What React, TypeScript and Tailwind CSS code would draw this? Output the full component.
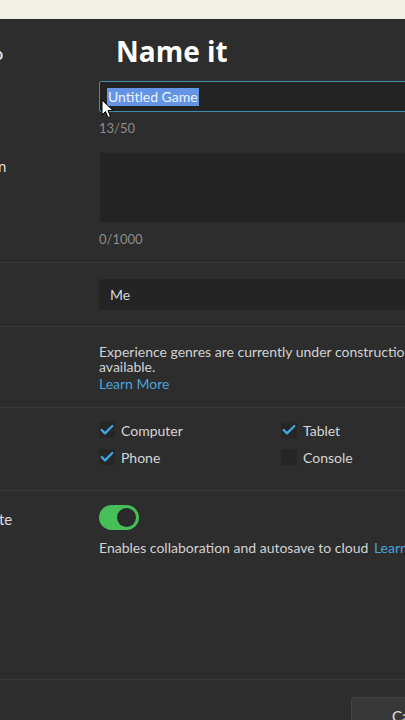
import { Check } from "lucide-react";

function Label({ children, className = "" }: { children: React.ReactNode; className?: string }) {
  return <div className={"pl-[10px] text-[15px] text-[#dcdcdc] " + className}>{children}</div>;
}

function Box({ checked, label }: { checked: boolean; label: string }) {
  return (
    <div className="flex items-center h-[18px] gap-[6px]">
      <div className="w-[16px] h-[16px] rounded-[2px] bg-[#262626] flex items-center justify-center">
        {checked && <Check className="w-[16px] h-[16px] text-[#41a6e4]" strokeWidth={3.4} />}
      </div>
      <span className="text-[14px] text-[#d6d6d6]">{label}</span>
    </div>
  );
}

export default function App() {
  return (
    <div
      className="w-[405px] h-[720px] overflow-hidden bg-[#2d2d2d] relative"
      style={{ fontFamily: "Lato, 'Open Sans', sans-serif" }}
    >
      <div className="h-[19px] bg-[#f2f1e6]" />

      <div className="-ml-[80px] w-[560px]">
        {/* name + description */}
        <div className="grid grid-cols-[179px_1fr] border-b border-[#3a3a3a] pb-[15px]">
          <div>
            <div className="pt-[22px] pl-[10px] text-[17px] font-semibold text-[#e6e6e6]">Basic Info</div>
            <Label className="mt-[32px]">Name</Label>
            <Label className="mt-[34px]">Description</Label>
          </div>
          <div>
            <div className="pt-[14px] pl-[17px] h-[50px] text-[28px] leading-[36px] font-bold text-white"
              style={{ fontFamily: "'Open Sans', Lato, sans-serif" }}>
              Name it
            </div>
            <div className="relative mt-[12px] h-[31px] w-[360px] bg-[#232323] border-[1.5px] border-[#3d8fae] rounded-[2px] flex items-center pl-[7px]">
              <span className="bg-[#6394e6] text-[#eef3ff] text-[14px] leading-[18px] px-[1px]">Untitled Game</span>
              <svg className="absolute left-[1px] top-[17px]" width="14" height="20" viewBox="0 0 14 20">
                <path d="M1 1 L1 16 L4.5 12.5 L7 18.5 L9.5 17.5 L7 11.5 L12 11.5 Z" fill="#ffffff" stroke="#000000" strokeWidth="1" />
              </svg>
            </div>
            <div className="mt-[8px] text-[13px] leading-[16px] text-[#8c8c8c]">13/50</div>
            <div className="mt-[16px] h-[71px] w-[360px] bg-[#242424] border border-[#2a2a2a] rounded-[2px]" />
            <div className="mt-[8px] text-[13px] leading-[16px] text-[#8c8c8c]">0/1000</div>
          </div>
        </div>

        {/* creator */}
        <div className="grid grid-cols-[179px_1fr] border-b border-[#3a3a3a] pt-[16px] pb-[16px]">
          <Label className="pt-[6px]">Creator</Label>
          <div className="h-[31px] w-[360px] bg-[#242424] rounded-[2px] flex items-center pl-[11px] text-[14px] text-[#d6d6d6]">
            Me
          </div>
        </div>

        {/* genre */}
        <div className="grid grid-cols-[179px_1fr] border-b border-[#3a3a3a] pt-[17px] pb-[16px]">
          <Label>Genre</Label>
          <div className="text-[14px] leading-[15px] text-[#d2d2d2]">
            <p className="whitespace-nowrap">
              Experience genres are currently under construction and are not yet
              <br />
              available.
            </p>
            <p className="mt-[2px] text-[#4aa3dc]">Learn More</p>
          </div>
        </div>

        {/* devices */}
        <div className="grid grid-cols-[179px_1fr] border-b border-[#3a3a3a] pt-[13px] pb-[24px]">
          <Label>Devices</Label>
          <div className="grid grid-cols-[182px_1fr] gap-y-[9px]">
            <Box checked label="Computer" />
            <Box checked label="Tablet" />
            <Box checked label="Phone" />
            <Box checked={false} label="Console" />
          </div>
        </div>

        {/* team create */}
        <div className="grid grid-cols-[179px_1fr] border-b border-[#3a3a3a] pt-[14px] h-[189px]">
          <Label className="pt-[3px]">Team Create</Label>
          <div>
            <div className="w-[40px] h-[25px] rounded-full bg-[#45bf57] flex items-center justify-end pr-[3px]">
              <div className="w-[19px] h-[19px] rounded-full bg-[#2a2a2a]" />
            </div>
            <div className="mt-[10px] text-[14px] leading-[16px] text-[#d2d2d2] whitespace-nowrap">
              Enables collaboration and autosave to cloud <span className="ml-[2px] text-[#4aa3dc]">Learn More</span>
            </div>
          </div>
        </div>

        {/* footer */}
        <div className="flex pt-[17px] pl-[431px]">
          <div className="h-[34px] w-[90px] bg-[#383838] border border-[#444444] rounded-[3px] pl-[40px] pt-[7px] text-[15px] text-[#e0e0e0]">
            Cancel
          </div>
        </div>
      </div>
    </div>
  );
}
